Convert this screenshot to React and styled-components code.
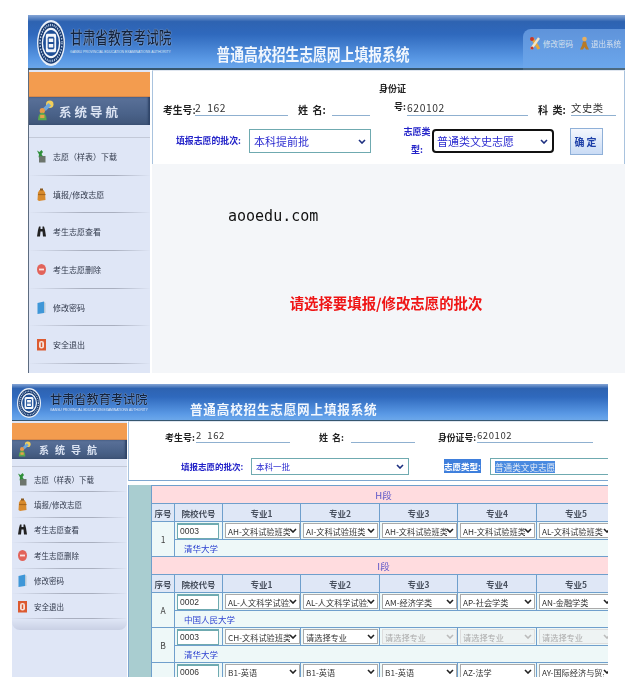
import React from "react";
import styled, { createGlobalStyle } from "styled-components";

const CJK = `"Noto Sans CJK SC", "Liberation Sans", sans-serif`;

const chevron = (color) =>
  `url("data:image/svg+xml,%3Csvg xmlns='http://www.w3.org/2000/svg' width='8' height='5'%3E%3Cpath d='M1 1l3 3 3-3' fill='none' stroke='%23${color}' stroke-width='1.6'/%3E%3C/svg%3E")`;

const GlobalStyle = createGlobalStyle`
  html, body { margin: 0; padding: 0; background: #fff; }
  body { width: 630px; height: 685px; overflow: hidden; font-family: ${CJK}; }
  * { box-sizing: border-box; }
`;

const Page = styled.div`
  display: flex;
  flex-direction: column;
  gap: 11px;
  padding-top: 15px;
`;

const Frame = styled.section`
  width: ${(p) => p.$w}px;
  height: ${(p) => p.$h}px;
  margin-left: ${(p) => p.$x}px;
  display: flex;
  flex-direction: column;
  overflow: hidden;
  filter: blur(0.35px);
`;

const Header = styled.header`
  flex: none;
  height: ${(p) => p.$h}px;
  display: flex;
  background: linear-gradient(#86a6d6 0, #2e63b1 12%, #2f69bd 35%, #5b9ae6 82%, #6aa6ea 96%, #36566f 97%, #36566f 100%);
`;

const Logo = styled.div`
  display: flex;
  align-items: center;
  flex: none;
  padding-left: ${(p) => p.$pad}px;
  gap: ${(p) => p.$gap}px;
`;

const Emblem = styled.svg`
  width: ${(p) => p.$w}px;
  height: ${(p) => p.$h}px;
  flex: none;
`;

const OrgName = styled.div`
  color: #12233f;
  font-size: ${(p) => p.$size}px;
  font-weight: 500;
  line-height: 1;
  white-space: nowrap;
  text-shadow: 0 0 1px #dfeaf8;
  transform: scaleY(${(p) => p.$stretch});
`;

const OrgEn = styled.div`
  color: #dfe8f5;
  font: ${(p) => p.$size}px "Liberation Sans", sans-serif;
  line-height: 4px;
  margin-top: ${(p) => p.$top}px;
  white-space: nowrap;
`;

const Title = styled.h1`
  margin: 0 0 0 ${(p) => p.$left}px;
  align-self: flex-end;
  padding-bottom: ${(p) => p.$bottom}px;
  color: #f2f7fd;
  font-size: ${(p) => p.$size}px;
  font-weight: 700;
  line-height: 1;
  letter-spacing: ${(p) => p.$spacing}px;
  white-space: nowrap;
  transform: scaleY(${(p) => p.$stretch});
`;

const Tabs = styled.div`
  margin-left: auto;
  align-self: flex-end;
  width: 102px;
  height: 41px;
  display: flex;
  align-items: center;
  gap: 7px;
  padding: 0 0 11px 6px;
  border-radius: 8px 0 0 0;
  background: linear-gradient(#5f93da, #6ba7ec);
  border-bottom: 2px solid #4c6a80;
`;

const TabLink = styled.span`
  display: flex;
  align-items: center;
  gap: 2px;
  color: #d8e2ee;
  font-size: 7.5px;
  white-space: nowrap;
`;

const Body = styled.div`
  flex: 1;
  min-height: 0;
  display: flex;
`;

const Sidebar = styled.nav`
  flex: none;
  width: ${(p) => p.$w}px;
  display: flex;
  flex-direction: column;
  background: #dfe6f6;
  border-left: ${(p) => (p.$edge ? "1px solid #5d6c80" : "0")};
`;

const Orange = styled.div`
  height: ${(p) => p.$h}px;
  margin-top: 2px;
  background: #f39c4f;
  border-bottom: 1px solid #d9894a;
`;

const NavHead = styled.div`
  height: ${(p) => p.$h}px;
  display: flex;
  align-items: center;
  gap: ${(p) => p.$gap}px;
  padding-left: ${(p) => p.$pad}px;
  color: #dbe3f2;
  font-size: ${(p) => p.$size}px;
  font-weight: 700;
  letter-spacing: ${(p) => p.$spacing}px;
  background: linear-gradient(#5a7199, #4a6289 60%, #3f5578);
  box-shadow: inset -2px 0 2px #2f4468;
`;

const NavList = styled.div`
  margin-top: ${(p) => p.$top}px;
  border-top: 1px solid #c3c9d8;
`;

const NavItem = styled.a`
  height: ${(p) => p.$h}px;
  display: flex;
  align-items: center;
  gap: ${(p) => p.$gap}px;
  padding-left: ${(p) => p.$pad}px;
  color: #30384a;
  font-size: ${(p) => p.$size}px;
  white-space: nowrap;
  border-bottom: 1px solid;
  border-image: linear-gradient(to right, #dfe6f6, #a9afbf 45%, #a9afbf 70%, #dfe6f6) 1;
`;

const NavFoot = styled.div`
  height: 11px;
  border-radius: 0 0 8px 8px;
  background: linear-gradient(#dfe6f6, #c9d0e4);
`;

const Main = styled.main`
  flex: 1;
  min-width: 0;
  display: flex;
  flex-direction: column;
  margin-left: ${(p) => p.$gap}px;
  background: ${(p) => p.$bg};
`;

const Panel = styled.div`
  flex: none;
  height: ${(p) => p.$h}px;
  display: flex;
  flex-direction: column;
  background: #fff;
  border-top: 1px solid #dfe6f0;
  border-left: 1px solid #a9c3de;
  border-right: ${(p) => (p.$closed ? "1px solid #a9c3de" : "0")};
  border-bottom: ${(p) => (p.$closed ? "0" : "1px solid #7ea6cf")};
`;

const FormRow = styled.div`
  display: flex;
  align-items: ${(p) => p.$align || "flex-end"};
  height: ${(p) => p.$h}px;
  padding-left: ${(p) => p.$pad}px;
  margin-top: ${(p) => p.$top || 0}px;
`;

const Label = styled.label`
  flex: none;
  width: ${(p) => p.$w}px;
  margin-left: ${(p) => p.$left || 0}px;
  color: ${(p) => p.$color || "#222"};
  font-size: ${(p) => p.$size}px;
  font-weight: 700;
  line-height: ${(p) => (p.$lh ? `${p.$lh}px` : 1.25)};
  text-align: ${(p) => p.$align || "left"};
  white-space: nowrap;
`;

const Value = styled.span`
  flex: none;
  width: ${(p) => p.$w}px;
  margin-left: 1px;
  color: #333;
  font-size: ${(p) => p.$size}px;
  line-height: 1.25;
  letter-spacing: 0.6px;
  white-space: pre;
  border-bottom: 1px solid #8fb0d0;
`;

const Choice = styled.select`
  flex: none;
  width: ${(p) => p.$w}px;
  height: ${(p) => p.$h}px;
  margin-left: ${(p) => p.$left || 0}px;
  padding: 0 0 0 ${(p) => (p.$focused ? 3 : 4)}px;
  color: #2a2ad0;
  font: ${(p) => p.$size}px ${CJK};
  appearance: none;
  background: #fff ${chevron("1d2f80")} no-repeat right 4px center;
  outline: 0;
  border: ${(p) => (p.$focused ? "2px solid #111" : "1px solid #6faab0")};
  border-radius: ${(p) => (p.$focused ? 4 : 0)}px;
`;

const Confirm = styled.button`
  flex: none;
  width: 33px;
  height: 27px;
  margin-left: 16px;
  padding: 0;
  color: #1d3fa8;
  font: 700 10px ${CJK};
  letter-spacing: 2px;
  background: linear-gradient(#f4f7fd, #c9dbf5);
  border: 1px solid #8fb0d8;
`;

const Highlight = styled.span`
  color: #fff;
  background: #3f7fdc;
  padding: 1px 0;
`;

const TypeBox = styled.div`
  flex: 1;
  height: 17px;
  margin-left: 6px;
  padding: 1px 0 0 4px;
  font-size: 8.6px;
  line-height: 14px;
  border: 1px solid #6faab0;
  border-right: 0;
  span { color: #dfe8f5; background: #4a8ae0; }
`;

const Watermark = styled.div`
  margin: 43px 0 0 76px;
  color: #111;
  font: 15px "DejaVu Sans Mono", monospace;
  line-height: 18px;
`;

const Notice = styled.div`
  margin-top: 68px;
  padding-right: 5px;
  text-align: center;
  color: #ef1515;
  font-size: 14.4px;
  font-weight: 700;
  line-height: 20px;
`;

const TableZone = styled.div`
  flex: 1;
  min-height: 0;
  margin-top: 4px;
  padding-left: 22px;
  background: #a9cdd0;
  border-left: 1px solid #7ea6cf;
  overflow: hidden;
`;

const Grid = styled.table`
  width: 464px;
  table-layout: fixed;
  border-collapse: collapse;
  background: #eef8f8;
  font-size: 8.5px;
`;

const SegmentCell = styled.td`
  height: 18px;
  padding: 0;
  text-align: center;
  color: #5a55c8;
  font-size: 9.5px;
  background: #ffdcdf;
  border: 1px solid #6f9fcc;
`;

const HeadCell = styled.th`
  height: 18px;
  padding: 0;
  color: #4a5260;
  font-size: 8.5px;
  font-weight: 700;
  background: #dfe7f6;
  border: 1px solid #6f9fcc;
`;

const Cell = styled.td`
  height: ${(p) => p.$h || 18}px;
  padding: 0 2px;
  color: ${(p) => p.$color || "#333"};
  text-align: ${(p) => p.$align || "left"};
  border: 1px solid #6f9fcc;
`;

const NameCell = styled(Cell)`
  padding-left: 9px;
  color: #2a3fd0;
`;

const CodeInput = styled.input`
  display: block;
  width: 42px;
  height: 16px;
  padding: 0 2px;
  color: #333;
  font: 8.5px "Liberation Sans", sans-serif;
  background: #fff;
  border: 1px solid #6faab0;
  border-top-width: 2px;
  outline: 0;
`;

const MajorSelect = styled.select`
  display: block;
  width: 75px;
  height: 15px;
  padding: 0 9px 0 2px;
  color: #333;
  font: 8.2px ${CJK};
  appearance: none;
  background: #fff ${chevron("222222")} no-repeat right 2px center;
  border: 1px solid #aaa;
  border-radius: 0;
  &:disabled {
    color: #aaa;
    background: #eef3f3 ${chevron("bbbbbb")} no-repeat right 2px center;
    border-color: #ddd;
    opacity: 1;
  }
`;

function EmblemMark({ w, h }) {
  return (
    <Emblem $w={w} $h={h} viewBox="0 0 60 60" preserveAspectRatio="none">
      <circle cx="30" cy="30" r="30" fill="#e8eff8" />
      <circle cx="30" cy="30" r="27" fill="#16386e" />
      <circle cx="30" cy="30" r="23.5" fill="none" stroke="#b8cde6" strokeWidth="3" strokeDasharray="2 2" />
      <circle cx="30" cy="30" r="20" fill="#f2f6fb" />
      <circle cx="30" cy="30" r="17" fill="#1d4e96" />
      <rect x="19" y="18" width="22" height="24" rx="3" fill="#f4f7fb" />
      <path d="M24 23v14M36 23v14M24 30h12M24 23h12M24 37h12" stroke="#1d4e96" strokeWidth="2.4" fill="none" />
    </Emblem>
  );
}

function GuideIcon({ size }) {
  return (
    <svg width={size} height={size * 1.25} viewBox="0 0 16 20">
      <circle cx="12" cy="4" r="3.5" fill="#f2cf5a" />
      <path d="M7 9 12 4" stroke="#6fa8dc" strokeWidth="3.5" />
      <circle cx="5" cy="10" r="2.5" fill="#e89a4a" />
      <path d="M1 19c0-5 2-7 4-7s4 2 4 7z" fill="#5aa84e" />
      <path d="M3 14h4v3H3z" fill="#e8a04a" />
    </svg>
  );
}

function NavIcon({ kind }) {
  return (
    <svg width="11" height="15" viewBox="0 0 11 15">
      {kind === "download" && (
        <>
          <rect x="3" y="7" width="6.5" height="6.5" fill="#6d756d" />
          <path d="M1 1.5 3.5 3 5.5 1 7 3 5.5 5 7 7.5 4.5 7 2.5 8.5 3 5.5z" fill="#2f8f3a" />
        </>
      )}
      {kind === "edit" && (
        <>
          <path d="M2 5.5 3.5 3h4L9 5.5l.5 7.5-6.5 1-1.5-1z" fill="#d88b2e" />
          <rect x="4" y="1.5" width="3" height="2" fill="#8a5a20" />
          <path d="M2 7.5h7.5" stroke="#a8661c" strokeWidth="1.2" />
        </>
      )}
      {kind === "view" && (
        <path d="M1 12.5 2 6l1-3.5h1.5V5h2V2.5H8L9 6l1 6.5H7l-.5-5h-2l-.5 5z" fill="#222" />
      )}
      {kind === "delete" && (
        <>
          <ellipse cx="5.5" cy="7.5" rx="4.5" ry="5.5" fill="#e2635a" />
          <rect x="3" y="6.6" width="5" height="1.8" fill="#fbe3e0" />
        </>
      )}
      {kind === "password" && (
        <>
          <path d="M1.5 3 8 1.5v11.5l-6.5 1z" fill="#3f97d8" />
          <path d="M8 1.5 9.5 3v10H8z" fill="#b7c9d8" />
        </>
      )}
      {kind === "exit" && (
        <>
          <rect x="1" y="2" width="9" height="11.5" fill="#dc5a30" />
          <rect x="3" y="4" width="5" height="7.5" rx="2.2" fill="#f6e2da" />
          <rect x="4.8" y="5.5" width="1.4" height="4.5" fill="#dc5a30" />
        </>
      )}
    </svg>
  );
}

const navItems = [
  ["download", "志愿（样表）下载"],
  ["edit", "填报/修改志愿"],
  ["view", "考生志愿查看"],
  ["delete", "考生志愿删除"],
  ["password", "修改密码"],
  ["exit", "安全退出"],
];

function SideNav({ compact }) {
  return (
    <Sidebar $w={compact ? 115 : 122} $edge={!compact}>
      <Orange $h={compact ? 17 : 25} />
      <NavHead
        $h={compact ? 19 : 28}
        $pad={compact ? 6 : 8}
        $gap={compact ? 8 : 5}
        $size={compact ? 10 : 12.5}
        $spacing={compact ? 6 : 3}
      >
        <GuideIcon size={compact ? 13 : 17} />
        系统导航
      </NavHead>
      <NavList $top={compact ? 7 : 12}>
        {navItems.map(([kind, label]) => (
          <NavItem
            key={kind}
            $h={compact ? 25.4 : 37.7}
            $pad={compact ? 5 : 7}
            $gap={compact ? 6 : 6}
            $size={compact ? 7.5 : 8}
          >
            <NavIcon kind={kind} />
            {label}
          </NavItem>
        ))}
      </NavList>
      {compact && <NavFoot />}
    </Sidebar>
  );
}

function FirstScreen() {
  return (
    <Frame $x={28} $w={597} $h={358}>
      <Header $h={55}>
        <Logo $pad={9} $gap={5}>
          <EmblemMark w={28} h={46} />
          <div>
            <OrgName $size={12.7} $stretch={1.35}>甘肃省教育考试院</OrgName>
            <OrgEn $top={6} $size={3.4}>GANSU PROVINCIAL EDUCATION EXAMINATIONS AUTHORITY</OrgEn>
          </div>
        </Logo>
        <Title $left={45} $bottom={7} $size={13.8} $spacing={0} $stretch={1.2}>
          普通高校招生志愿网上填报系统
        </Title>
        <Tabs>
          <TabLink>
            <svg width="12" height="15" viewBox="0 0 12 15">
              <path d="M3 2l7 11" stroke="#e8a83a" strokeWidth="3" />
              <path d="M10 2 2 13" stroke="#f2e4c8" strokeWidth="2.4" />
              <circle cx="3" cy="3" r="2" fill="#c8382a" />
              <circle cx="3" cy="12" r="1.6" fill="#c8382a" />
            </svg>
            修改密码
          </TabLink>
          <TabLink>
            <svg width="9" height="15" viewBox="0 0 9 15">
              <circle cx="4.5" cy="3" r="2.3" fill="#e8b060" />
              <path d="M3 5.5h3l1 4 2 4H6L4.5 11 3 13.5H0l2-4z" fill="#b87a24" />
            </svg>
            退出系统
          </TabLink>
        </Tabs>
      </Header>
      <Body>
        <SideNav />
        <Main $gap={2} $bg="#f4f6f9">
          <Panel $h={94} $closed>
            <FormRow $h={45} $pad={10}>
              <Label $w={31} $size={9.8}>考生号:</Label>
              <Value $w={93} $size={10.3}>{"2  162"}</Value>
              <Label $w={33} $left={10} $size={10}>姓 &nbsp;名:</Label>
              <Value $w={38} $size={10}> </Value>
              <Label $w={27} $left={9} $size={9} $lh={18} $align="right">身份证<br />号:</Label>
              <Value $w={121} $size={10.3}>620102</Value>
              <Label $w={32} $left={10} $size={10}>科 &nbsp;类:</Label>
              <Value $w={45} $size={10.3}>文史类</Value>
            </FormRow>
            <FormRow $h={28} $pad={23} $top={11} $align="center">
              <Label $w={66} $size={8.9} $color="#2222c8">填报志愿的批次:</Label>
              <Choice $w={122} $h={24} $left={7} $size={11} defaultValue="a">
                <option value="a">本科提前批</option>
              </Choice>
              <Label $w={28} $left={32} $size={9} $lh={18} $color="#2222c8" $align="center">志愿类<br />型:</Label>
              <Choice $w={122} $h={24} $left={1} $size={11} $focused defaultValue="a">
                <option value="a">普通类文史志愿</option>
              </Choice>
              <Confirm>确定</Confirm>
            </FormRow>
          </Panel>
          <Watermark>aooedu.com</Watermark>
          <Notice>请选择要填报/修改志愿的批次</Notice>
        </Main>
      </Body>
    </Frame>
  );
}

const widths = [23, 48, 78, 79, 78, 79, 79];
const majorTitles = ["专业1", "专业2", "专业3", "专业4", "专业5"];

const segments = [
  {
    title: "H段",
    rows: [
      {
        seq: "1",
        code: "0003",
        name: "清华大学",
        majors: ["AH-文科试验班类", "AI-文科试验班类", "AH-文科试验班类", "AH-文科试验班类", "AL-文科试验班类"],
      },
    ],
  },
  {
    title: "I段",
    rows: [
      {
        seq: "A",
        code: "0002",
        name: "中国人民大学",
        majors: ["AL-人文科学试验班", "AL-人文科学试验班", "AM-经济学类", "AP-社会学类", "AN-金融学类"],
      },
      {
        seq: "B",
        code: "0003",
        name: "清华大学",
        majors: ["CH-文科试验班类", "请选择专业", "请选择专业", "请选择专业", "请选择专业"],
        disabledFrom: 2,
      },
      {
        seq: "C",
        code: "0006",
        name: "",
        majors: ["B1-英语", "B1-英语", "B1-英语", "AZ-法学", "AY-国际经济与贸易"],
      },
    ],
  },
];

function SegmentRows({ segment }) {
  return (
    <>
      <tr>
        <SegmentCell colSpan={7}>{segment.title}</SegmentCell>
      </tr>
      <tr>
        <HeadCell>序号</HeadCell>
        <HeadCell>院校代号</HeadCell>
        {majorTitles.map((t) => (
          <HeadCell key={t}>{t}</HeadCell>
        ))}
      </tr>
      {segment.rows.map((row) => (
        <React.Fragment key={row.seq}>
          <tr>
            <Cell rowSpan={2} $align="center" $color="#444">{row.seq}</Cell>
            <Cell $h={18}>
              <CodeInput defaultValue={row.code} readOnly />
            </Cell>
            {row.majors.map((m, i) => (
              <Cell key={i} $h={18}>
                <MajorSelect disabled={row.disabledFrom !== undefined && i >= row.disabledFrom} defaultValue={m}>
                  <option>{m}</option>
                </MajorSelect>
              </Cell>
            ))}
          </tr>
          <tr>
            <NameCell colSpan={6} $h={17}>{row.name}</NameCell>
          </tr>
        </React.Fragment>
      ))}
    </>
  );
}

function SecondScreen() {
  return (
    <Frame $x={12} $w={596} $h={293}>
      <Header $h={37}>
        <Logo $pad={5} $gap={9}>
          <EmblemMark w={24} h={30} />
          <div>
            <OrgName $size={12.2} $stretch={1}>甘肃省教育考试院</OrgName>
            <OrgEn $top={2} $size={3.3}>GANSU PROVINCIAL EDUCATION EXAMINATIONS AUTHORITY</OrgEn>
          </div>
        </Logo>
        <Title $left={42} $bottom={5} $size={12.6} $spacing={0.8} $stretch={1}>
          普通高校招生志愿网上填报系统
        </Title>
      </Header>
      <Body>
        <SideNav compact />
        <Main $gap={1} $bg="#fff">
          <Panel $h={60}>
            <FormRow $h={21} $pad={36}>
              <Label $w={30} $size={9}>考生号:</Label>
              <Value $w={94} $size={9.5}>{"2  162"}</Value>
              <Label $w={31} $left={29} $size={9}>姓 &nbsp;名:</Label>
              <Value $w={64} $size={9}> </Value>
              <Label $w={38} $left={23} $size={8.8}>身份证号:</Label>
              <Value $w={116} $size={9.5}>620102</Value>
            </FormRow>
            <FormRow $h={18} $pad={52} $top={14} $align="center">
              <Label $w={64} $size={8.5} $color="#2222c8">填报志愿的批次:</Label>
              <Choice $w={158} $h={17} $left={6} $size={8.5} defaultValue="a">
                <option value="a">本科一批</option>
              </Choice>
              <Label $w={40} $left={35} $size={8.5}>
                <Highlight>志愿类型:</Highlight>
              </Label>
              <TypeBox><span>普通类文史志愿</span></TypeBox>
            </FormRow>
          </Panel>
          <TableZone>
            <Grid>
              <colgroup>
                {widths.map((w, i) => (
                  <col key={i} style={{ width: w }} />
                ))}
              </colgroup>
              <tbody>
                {segments.map((s) => (
                  <SegmentRows key={s.title} segment={s} />
                ))}
              </tbody>
            </Grid>
          </TableZone>
        </Main>
      </Body>
    </Frame>
  );
}

export default function App() {
  return (
    <Page>
      <GlobalStyle />
      <FirstScreen />
      <SecondScreen />
    </Page>
  );
}
